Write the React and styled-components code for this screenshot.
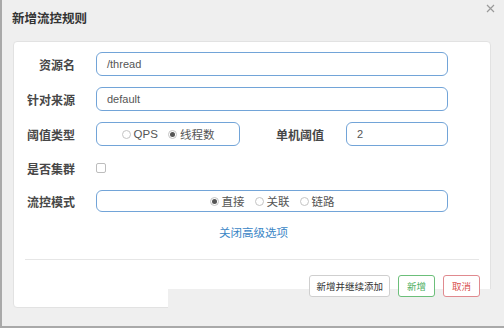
import React from "react";
import styled, { createGlobalStyle } from "styled-components";

const Global = createGlobalStyle`
  html, body { margin: 0; padding: 0; background: #efefef; }
  body { font-family: "Liberation Sans", "Noto Sans CJK SC", sans-serif; }
  * { box-sizing: border-box; }
`;

const CJK = `"Liberation Sans", "Noto Sans CJK SC", sans-serif`;

const Dialog = styled.div`
  position: relative;
  width: 504px;
  height: 328px;
  background: #efefef;
  border-left: 2px solid #a9a9a9;
  border-bottom: 2px solid #a9a9a9;
  display: flex;
  flex-direction: column;
`;

const Header = styled.div`
  height: 41px;
  display: flex;
  align-items: center;
  padding-left: 10px;
  padding-bottom: 6px;
`;

const Title = styled.h4`
  margin: 0;
  font-family: ${CJK};
  font-size: 12.5px;
  font-weight: bold;
  color: #333;
`;

const Close = styled.span`
  position: absolute;
  z-index: 2;
  top: 4px;
  right: 9px;
  width: 9px;
  height: 9px;
  display: block;
  line-height: 0;
`;

const Panel = styled.div`
  position: relative;
  margin-left: 11px;
  width: 478px;
  height: 267px;
  background: #fff;
  border: 1px solid #e2e2e2;
  border-radius: 4px;
  padding: 10px 11px 10px 11px;
  display: flex;
  flex-direction: column;
  &::after {
    content: "";
    position: absolute;
    left: 154px;
    right: -1px;
    bottom: -1px;
    height: 19px;
    background: #efefef;
  }
`;

const Form = styled.div`
  display: flex;
  flex-direction: column;
  gap: 11px;
  padding-right: 31px;
`;

const Row = styled.div`
  display: flex;
  align-items: center;
  height: ${(p) => p.$h || 24}px;
`;

const Label = styled.label`
  width: ${(p) => p.$w || 50}px;
  flex: none;
  text-align: right;
  margin-right: ${(p) => p.$mr || 21}px;
  font-family: ${CJK};
  font-size: 12px;
  font-weight: bold;
  color: #474747;
  white-space: nowrap;
`;

const Input = styled.div`
  flex: ${(p) => (p.$w ? "none" : "1")};
  width: ${(p) => (p.$w ? p.$w + "px" : "auto")};
  height: 100%;
  border: 1px solid #72a4d8;
  border-radius: 6px;
  padding: 0 10px;
  display: flex;
  align-items: center;
  font-family: ${CJK};
  font-size: 11px;
  color: #555;
`;

const RadioBox = styled(Input)`
  justify-content: center;
  gap: 10px;
  padding: 0;
`;

const RadioItem = styled.span`
  display: inline-flex;
  align-items: center;
  gap: 3px;
  font-family: ${CJK};
  font-size: 11.5px;
  color: #555;
`;

const Circle = styled.span`
  width: 9px;
  height: 9px;
  border-radius: 50%;
  border: 1px solid #c4c4c4;
  background: #fff;
  display: inline-flex;
  align-items: center;
  justify-content: center;
  &::after {
    content: "";
    width: 5px;
    height: 5px;
    border-radius: 50%;
    background: ${(p) => (p.$on ? "#555" : "transparent")};
  }
`;

const Check = styled.span`
  width: 10px;
  height: 10px;
  border: 1px solid #bdbdbd;
  border-radius: 2px;
  background: #fff;
`;

const Spacer = styled.div`
  flex: 1;
`;

const Link = styled.a`
  align-self: center;
  margin-top: 13px;
  margin-left: 3px;
  font-family: ${CJK};
  font-size: 11.5px;
  line-height: 16px;
  color: #3b86c6;
  text-decoration: none;
`;

const Divider = styled.hr`
  margin: 18px 0 0 0;
  border: 0;
  border-top: 1px solid #e6e6e6;
`;

const Footer = styled.div`
  position: relative;
  z-index: 1;
  margin-top: 15px;
  display: flex;
  justify-content: flex-end;
  gap: 8px;
  margin-right: -1px;
`;

const Button = styled.button`
  height: 22px;
  padding: 0 ${(p) => p.$px || 6}px;
  border: 1px solid ${(p) => p.$c || "#cfcfcf"};
  border-radius: 3px;
  background: #fff;
  color: ${(p) => p.$t || "#333"};
  font-family: ${CJK};
  font-size: 9.5px;
  cursor: pointer;
`;

export default function App() {
  return (
    <>
      <Global />
      <Dialog>
        <Header>
          <Title>新增流控规则</Title>
        </Header>
        <Close aria-label="关闭">
          <svg width="9" height="9" viewBox="0 0 9 9">
            <path d="M1 1L8 8M8 1L1 8" stroke="#9a9a9a" strokeWidth="1.2" fill="none" />
          </svg>
        </Close>
        <Panel>
          <Form>
            <Row>
              <Label>资源名</Label>
              <Input>/thread</Input>
            </Row>
            <Row>
              <Label>针对来源</Label>
              <Input>default</Input>
            </Row>
            <Row>
              <Label>阈值类型</Label>
              <RadioBox $w={144}>
                <RadioItem>
                  <Circle />
                  QPS
                </RadioItem>
                <RadioItem>
                  <Circle $on />
                  线程数
                </RadioItem>
              </RadioBox>
              <Spacer />
              <Label $w={48} $mr={22}>单机阈值</Label>
              <Input $w={102}>2</Input>
            </Row>
            <Row $h={22}>
              <Label>是否集群</Label>
              <Check />
            </Row>
            <Row $h={22}>
              <Label>流控模式</Label>
              <RadioBox>
                <RadioItem>
                  <Circle $on />
                  直接
                </RadioItem>
                <RadioItem>
                  <Circle />
                  关联
                </RadioItem>
                <RadioItem>
                  <Circle />
                  链路
                </RadioItem>
              </RadioBox>
            </Row>
          </Form>
          <Link>关闭高级选项</Link>
          <Divider />
          <Footer>
            <Button>新增并继续添加</Button>
            <Button $c="#6cbf7a" $t="#4caf5f" $px={8}>新增</Button>
            <Button $c="#e08a8f" $t="#d9534f" $px={8}>取消</Button>
          </Footer>
        </Panel>
      </Dialog>
    </>
  );
}
